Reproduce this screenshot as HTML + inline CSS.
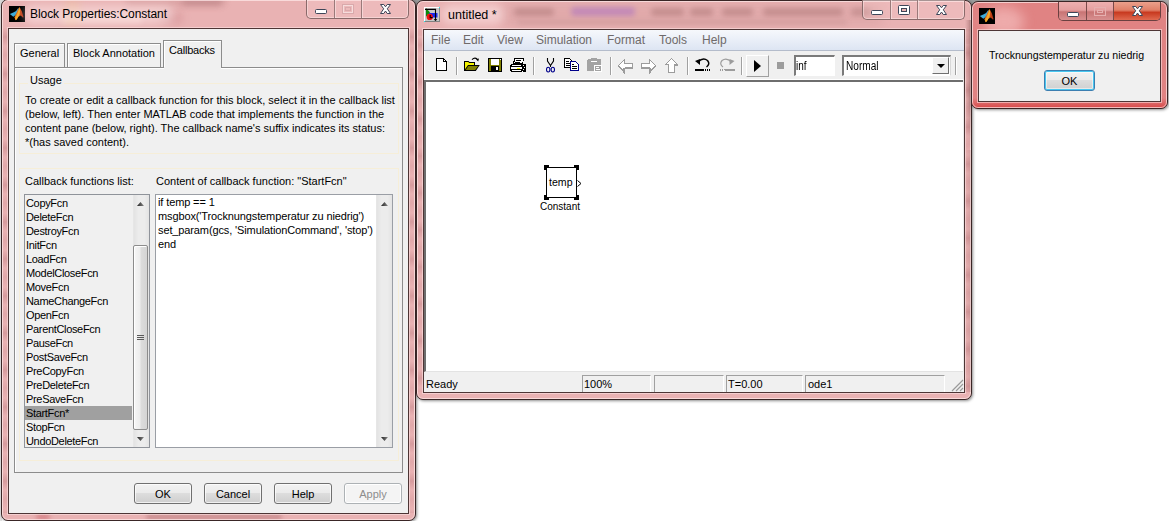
<!DOCTYPE html>
<html><head><meta charset="utf-8">
<style>
*{box-sizing:border-box;margin:0;padding:0}
html,body{width:1169px;height:521px;overflow:hidden;background:#fff;font-family:"Liberation Sans",sans-serif;font-size:11px;color:#000}
.a{position:absolute}
.t{position:absolute;white-space:pre;line-height:14px}
svg{position:absolute;overflow:visible}
.frame{position:absolute;border:1px solid #3a2626;border-radius:7px;overflow:hidden;box-shadow:1px 1px 3px rgba(0,0,0,.45)}
.frame::after{content:"";position:absolute;left:0;top:0;right:0;bottom:0;border:1px solid rgba(255,235,235,.7);border-radius:6px}
.pink{background:#e9b2b3}
.red{background:#e08383}
.client{position:absolute;background:#f0f0f0;border:1px solid #4d3535;box-shadow:0 0 0 1px rgba(255,232,232,.55)}
.tbtns{position:absolute;top:-1px;height:20px;border:1px solid #8a6a6a;border-top:none;border-radius:0 0 5px 5px;background:rgba(255,220,220,.2);box-shadow:inset 0 0 0 1px rgba(255,240,240,.45)}
.tdiv{position:absolute;top:0;bottom:0;width:1px;background:#9a7a7a;box-shadow:1px 0 0 rgba(255,240,240,.5)}
.btn{position:absolute;height:21px;border:1px solid #707070;border-radius:3px;background:linear-gradient(#f2f2f2 0,#ebebeb 45%,#dddddd 50%,#cfcfcf 100%);text-align:center;line-height:20px;box-shadow:inset 0 0 0 1px rgba(255,255,255,.7)}
.tab{position:absolute;border:1px solid #8c8c8c;border-bottom:none;background:#f0f0f0;box-shadow:inset 1px 1px 0 #fff}
.sb{position:absolute;background:linear-gradient(90deg,#e3e3e3,#ececec 30%,#ececec 70%,#e3e3e3);border-left:1px solid #e6e6e6}
.blob{position:absolute;filter:blur(2.5px);border-radius:4px}
.menu{position:absolute;top:33px;font-size:12px;line-height:14px;color:#6f6a6a;white-space:pre}
.sep{position:absolute;top:57px;width:2px;height:18px;border-left:1px solid #a0a0a0;border-right:1px solid #fff}
.panel{position:absolute;top:375px;height:17px;border-top:1px solid #a0a0a0;border-left:1px solid #a0a0a0;border-right:1px solid #fff}
</style></head><body>

<div class="a" style="left:0;top:0;width:2px;height:521px;background:#e4e4e4"></div>
<div class="a" style="left:0;top:0;width:8px;height:8px;background:#d8d8d8"></div>
<div class="a" style="left:408px;top:0;width:16px;height:8px;background:#9a9a9a"></div>
<div class="a" style="left:962px;top:0;width:16px;height:8px;background:#9a9a9a"></div>
<div class="a" style="left:972px;top:0;width:197px;height:2px;background:#9c9c9c"></div>
<div class="a" style="left:1160px;top:0;width:9px;height:12px;background:#a8a8a8"></div>
<!-- ============ Window 1: Block Properties ============ -->
<div class="frame pink" style="left:1px;top:-1px;width:415px;height:522px;">
  <div class="blob" style="left:124px;top:-3px;width:100px;height:8px;background:rgba(170,110,110,.25);filter:blur(3px)"></div>
  <div class="blob" style="left:180px;top:-2px;width:40px;height:8px;background:rgba(150,90,95,.3);filter:blur(3px)"></div>
  <div class="blob" style="left:60px;top:14px;width:80px;height:10px;background:rgba(255,230,220,.35)"></div>
  <div class="blob" style="left:62px;top:0;width:16px;height:26px;background:rgba(235,185,130,.35);filter:blur(4px)"></div>
  <div class="blob" style="left:158px;top:12px;width:22px;height:12px;background:rgba(190,110,115,.3);filter:blur(4px)"></div>
  <div class="blob" style="left:144px;top:514px;width:136px;height:6px;background:rgba(150,80,85,.35);filter:blur(2px)"></div>
  <div class="blob" style="left:34px;top:514px;width:14px;height:6px;background:rgba(190,70,80,.4);filter:blur(2px)"></div>
</div>
<svg style="left:9px;top:6px" width="16" height="16" viewBox="0 0 16 16">
  <defs><linearGradient id="mg" x1="0" y1="0" x2="1" y2="0"><stop offset="0" stop-color="#f08a20"/><stop offset=".5" stop-color="#d8561a"/><stop offset="1" stop-color="#a82810"/></linearGradient></defs>
  <rect width="16" height="16" fill="#000"/>
  <path d="M.8,8.1 L4.3,6.4 L7.1,5 L8.9,2.6 L9.8,2 L8.6,6.5 L6,9.6 L4.3,10.7 Z" fill="#3eaad8"/>
  <path d="M10.6,.9 L12.9,5.5 L14.6,11.3 L13.8,11.6 L11.7,9.6 L9.4,10.7 L7.7,13.6 L6.6,14.2 L5.4,11.3 L7.1,7.8 L8.9,3.8 Z" fill="url(#mg)"/>
  <path d="M10.6,1.2 L11.2,4.5 L10.6,8.4 L9.2,11 L7.7,13.6 L6.7,14 L6.4,12.2 L8,8.5 L9.6,3.5 Z" fill="#f6b42a" opacity=".9"/>
</svg>
<div class="a" style="left:24px;top:5px;width:150px;height:19px;border-radius:9px;background:rgba(255,240,240,.45);filter:blur(4px)"></div>
<div class="t" style="left:30px;top:7px;font-size:12px;line-height:15px;color:#000;letter-spacing:-.07px">Block Properties:Constant</div>
<div class="tbtns" style="left:306px;width:103px;">
  <div class="tdiv" style="left:27px"></div><div class="tdiv" style="left:54px"></div>
</div>
<svg style="left:315px;top:9px" width="12" height="5" viewBox="0 0 12 5"><rect x=".5" y=".5" width="11" height="4" rx="1" fill="#fff" stroke="#3d4658"/></svg>
<svg style="left:342px;top:4px" width="12" height="10" viewBox="0 0 12 10"><rect x=".5" y=".5" width="11" height="9" fill="none" stroke="#d9a9ab"/><rect x="1.5" y="1.5" width="9" height="7" fill="none" stroke="#f6dcdc" stroke-width="1"/><rect x="3.5" y="3.5" width="5" height="3" fill="none" stroke="#d9a9ab"/></svg>
<svg style="left:380px;top:4px" width="11" height="10" viewBox="0 0 11 10"><path d="M.5,.5 H3.8 L5.5,2.8 L7.2,.5 H10.5 L7.3,4.8 L10.5,9.5 H7.2 L5.5,7 L3.8,9.5 H.5 L3.7,4.8 Z" fill="#fff" stroke="#3d4658" stroke-width="1" stroke-linejoin="round"/></svg>
<div class="a" style="left:3px;top:28px;width:5px;height:485px;background:repeating-linear-gradient(180deg,rgba(165,95,100,0) 0,rgba(165,95,100,.28) 9px,rgba(165,95,100,0) 18px,rgba(165,95,100,.12) 27px,rgba(165,95,100,0) 37px)"></div>
<div class="a" style="left:409px;top:28px;width:5px;height:485px;background:repeating-linear-gradient(180deg,rgba(165,95,100,0) 0,rgba(165,95,100,.28) 9px,rgba(165,95,100,0) 18px,rgba(165,95,100,.12) 27px,rgba(165,95,100,0) 37px)"></div>
<div class="client" style="left:8px;top:28px;width:401px;height:486px;"></div>

<!-- tabs -->
<div class="a" style="left:14px;top:67px;width:389px;height:406px;border:1px solid #8c8c8c;background:#f0f0f0;box-shadow:inset 1px 1px 0 #fff"></div>
<div class="tab" style="left:14px;top:43px;width:51px;height:24px"></div>
<div class="tab" style="left:67px;top:43px;width:94px;height:24px"></div>
<div class="tab" style="left:163px;top:40px;width:59px;height:28px"></div>
<div class="a" style="left:164px;top:67px;width:57px;height:2px;background:#f0f0f0"></div>
<div class="t" style="left:20px;top:46px">General</div>
<div class="t" style="left:73px;top:46px">Block Annotation</div>
<div class="t" style="left:169px;top:43px;letter-spacing:-.2px">Callbacks</div>

<!-- usage group -->
<div class="a" style="left:19px;top:83px;width:380px;height:71px;border:1px solid #f6eed8"></div>
<div class="a" style="left:28px;top:76px;width:36px;height:10px;background:#f0f0f0"></div>
<div class="t" style="left:30px;top:73px">Usage</div>
<div class="t" style="left:25px;top:93px">To create or edit a callback function for this block, select it in the callback list
(below, left). Then enter MATLAB code that implements the function in the
content pane (below, right). The callback name's suffix indicates its status:
*(has saved content).</div>

<div class="a" style="left:19px;top:168px;width:380px;height:293px;border:1px solid #f6eed8"></div>
<div class="t" style="left:25px;top:174px">Callback functions list:</div>
<div class="t" style="left:156px;top:174px">Content of callback function: "StartFcn"</div>

<!-- list -->
<div class="a" style="left:24px;top:194px;width:126px;height:254px;border:1px solid #8f939a;background:#f0f0f0;overflow:hidden">
  <div class="a" style="left:0;top:211px;width:107px;height:14px;background:#a0a0a0"></div>
  <div class="t" style="left:1px;top:1px;letter-spacing:-0.33px">CopyFcn
DeleteFcn
DestroyFcn
InitFcn
LoadFcn
ModelCloseFcn
MoveFcn
NameChangeFcn
OpenFcn
ParentCloseFcn
PauseFcn
PostSaveFcn
PreCopyFcn
PreDeleteFcn
PreSaveFcn
StartFcn*
StopFcn
UndoDeleteFcn</div>
  <div class="sb" style="left:108px;top:0;width:16px;height:252px"></div>
  <div class="a" style="left:108px;top:50px;width:15px;height:185px;border:1px solid #8c8c8c;border-radius:2px;background:linear-gradient(90deg,#f7f7f7,#ededed 45%,#dcdcdc 55%,#d4d4d4);box-shadow:inset 1px 1px 0 #fff"></div>
  <svg style="left:112px;top:140px" width="7" height="5"><path d="M0,.5H7M0,2.5H7M0,4.5H7" stroke="#5a5a5a" stroke-width="1"/></svg>
  <svg style="left:112px;top:7px" width="7" height="4"><defs><linearGradient id="ag" x1="0" x2="1"><stop offset="0" stop-color="#222"/><stop offset="1" stop-color="#888"/></linearGradient></defs><path d="M0,4 L3.5,0 L7,4 Z" fill="url(#ag)"/></svg>
  <svg style="left:112px;top:242px" width="7" height="4"><path d="M0,0 L3.5,4 L7,0 Z" fill="url(#ag)"/></svg>
</div>

<!-- code -->
<div class="a" style="left:155px;top:194px;width:238px;height:254px;border:1px solid #9a9ea5;background:#fff;overflow:hidden">
  <div class="t" style="left:2px;top:0px;letter-spacing:-0.12px">if temp == 1
msgbox('Trocknungstemperatur zu niedrig')
set_param(gcs, 'SimulationCommand', 'stop')
end</div>
  <div class="sb" style="left:220px;top:0;width:16px;height:252px"></div>
  <svg style="left:225px;top:7px" width="7" height="4"><path d="M0,4 L3.5,0 L7,4 Z" fill="url(#ag)"/></svg>
  <svg style="left:225px;top:242px" width="7" height="4"><path d="M0,0 L3.5,4 L7,0 Z" fill="url(#ag)"/></svg>
</div>

<!-- buttons -->
<div class="btn" style="left:134px;top:483px;width:58px">OK</div>
<div class="btn" style="left:204px;top:483px;width:58px">Cancel</div>
<div class="btn" style="left:274px;top:483px;width:58px">Help</div>
<div class="btn" style="left:344px;top:483px;width:58px;border-color:#adb2b5;background:#f4f4f4;color:#8d8d8d;box-shadow:inset 0 0 0 1px #fff">Apply</div>

<!-- ============ Window 2: Simulink ============ -->
<div class="frame pink" style="left:416px;top:0px;width:556px;height:400px;">
  <div class="blob" style="left:97px;top:7px;width:40px;height:8px;background:rgba(150,95,95,.35)"></div>
  <div class="blob" style="left:154px;top:6px;width:64px;height:9px;background:rgba(170,110,205,.5)"></div>
  <div class="blob" style="left:234px;top:7px;width:33px;height:8px;background:rgba(150,95,95,.35)"></div>
  <div class="blob" style="left:273px;top:7px;width:23px;height:8px;background:rgba(150,95,95,.35)"></div>
  <div class="blob" style="left:305px;top:7px;width:31px;height:8px;background:rgba(150,95,95,.35)"></div>
  <div class="blob" style="left:346px;top:7px;width:80px;height:8px;background:rgba(150,95,95,.35)"></div>
  <div class="blob" style="left:434px;top:7px;width:20px;height:8px;background:rgba(150,95,95,.3)"></div>
  <div class="blob" style="left:100px;top:19px;width:330px;height:5px;background:rgba(170,120,120,.2)"></div>
  <div class="blob" style="left:85px;top:2px;width:380px;height:24px;background:rgba(160,100,100,.1);filter:blur(5px)"></div>
</div>
<svg style="left:424px;top:7px" width="16" height="15" viewBox="0 0 16 15">
  <rect x="0" y="0" width="16" height="15" fill="#c8c8c8"/>
  <path d="M0,0H16V1H1V15H0Z" fill="#fff"/>
  <path d="M16,0V15H0V14H15V0Z" fill="#808080"/>
  <path d="M2,1 L2,9.7 L6,5.5 Z" fill="#0a8a0a"/>
  <rect x="5" y="6" width="8.5" height="4.5" fill="#1428f0"/>
  <circle cx="5.7" cy="9.9" r="3.1" fill="#f01010"/>
  <path d="M6.2,8 V10.6 H8.6" stroke="#000" stroke-width="1.1" fill="none"/>
  <path d="M1,2.4 H11.5 V13" stroke="#000" stroke-width="1.1" fill="none"/>
  <path d="M10.2,12.2 L11.5,13.8 L12.8,12.2" stroke="#000" stroke-width="1" fill="none"/>
  <rect x="15" y="0" width="1" height="1" fill="#2ee"/><rect x="0" y="14" width="1" height="1" fill="#2ee"/>
</svg>
<div class="a" style="left:442px;top:5px;width:62px;height:19px;border-radius:9px;background:rgba(255,240,240,.45);filter:blur(4px)"></div>
<div class="t" style="left:448px;top:8px;font-size:12.5px;line-height:15px;color:#000">untitled *</div>
<div class="tbtns" style="left:862px;width:103px;top:0;height:20px">
  <div class="tdiv" style="left:27px"></div><div class="tdiv" style="left:54px"></div>
</div>
<svg style="left:871px;top:10px" width="12" height="5" viewBox="0 0 12 5"><rect x=".5" y=".5" width="11" height="4" rx="1" fill="#fff" stroke="#3d4658"/></svg>
<svg style="left:898px;top:5px" width="12" height="10" viewBox="0 0 12 10"><rect x=".5" y=".5" width="11" height="9" rx="1" fill="#fff" stroke="#3d4658"/><rect x="3.5" y="3.5" width="5" height="3" fill="#e9b2b3" stroke="#3d4658"/></svg>
<svg style="left:936px;top:5px" width="11" height="10" viewBox="0 0 11 10"><path d="M.5,.5 H3.8 L5.5,2.8 L7.2,.5 H10.5 L7.3,4.8 L10.5,9.5 H7.2 L5.5,7 L3.8,9.5 H.5 L3.7,4.8 Z" fill="#fff" stroke="#3d4658" stroke-width="1" stroke-linejoin="round"/></svg>
<div class="a" style="left:418px;top:29px;width:5px;height:363px;background:repeating-linear-gradient(180deg,rgba(165,95,100,0) 0,rgba(165,95,100,.28) 9px,rgba(165,95,100,0) 18px,rgba(165,95,100,.12) 27px,rgba(165,95,100,0) 37px);background-position:0 7px"></div>
<div class="a" style="left:965px;top:29px;width:5px;height:363px;background:repeating-linear-gradient(180deg,rgba(165,95,100,0) 0,rgba(165,95,100,.28) 9px,rgba(165,95,100,0) 18px,rgba(165,95,100,.12) 27px,rgba(165,95,100,0) 37px);background-position:0 15px"></div>
<div class="a" style="left:965px;top:20px;width:6px;height:130px;background:linear-gradient(90deg,rgba(90,40,40,0),rgba(90,40,40,.32));-webkit-mask-image:linear-gradient(#000 65%,transparent)"></div>
<div class="a" style="left:965px;top:150px;width:6px;height:242px;background:linear-gradient(90deg,rgba(90,40,40,0),rgba(90,40,40,.12))"></div>
<div class="client" style="left:423px;top:29px;width:542px;height:364px;"></div>
<div class="a" style="left:424px;top:30px;width:540px;height:21px;background:linear-gradient(#f6f8fc,#dde5f3);border-bottom:1px solid #b4bccb"></div>
<div class="menu" style="left:431px">File</div>
<div class="menu" style="left:463px">Edit</div>
<div class="menu" style="left:497px">View</div>
<div class="menu" style="left:536px">Simulation</div>
<div class="menu" style="left:607px">Format</div>
<div class="menu" style="left:659px">Tools</div>
<div class="menu" style="left:702px">Help</div>
<div class="a" style="left:424px;top:51px;width:540px;height:29px;background:#f0f0f0;border-left:1px solid #fff;border-bottom:1px solid #fff;border-right:1px solid #e6e6e6"></div>

<!-- toolbar icons -->
<svg style="left:436px;top:58px" width="12" height="14" viewBox="0 0 12 14" shape-rendering="crispEdges">
  <path d="M.5,.5 H7.5 L10.5,3.5 V12.5 H.5 Z" fill="#fff" stroke="#000"/>
  <path d="M7.5,.5 V3.5 H10.5" fill="none" stroke="#000"/>
</svg>
<div class="sep" style="left:456px"></div>
<svg style="left:464px;top:57px" width="16" height="15" viewBox="0 0 16 15">
  <path d="M0,4 H4.5 L5.5,5 H11 V8 H15.8 L11.8,14 H0 Z" fill="#000"/>
  <path d="M1,5 H4.2 L5.2,6 H10 V8 H4 L1,12.3 Z" fill="#f4f400"/>
  <path d="M4.4,9 H14.2 L11.2,13 H1.6 Z" fill="#808000"/>
  <path d="M8,2.6 Q10.5,0 13.2,2" stroke="#000" stroke-width="1.1" fill="none"/>
  <path d="M12,2.2 L15,1.6 L14.2,4.6 Z" fill="#000"/>
</svg>
<svg style="left:488px;top:58px" width="14" height="14" viewBox="0 0 14 14" shape-rendering="crispEdges">
  <rect x="0" y="0" width="14" height="14" fill="#000"/>
  <rect x="1" y="1" width="12" height="12" fill="#808000"/>
  <rect x="3" y="1" width="8" height="6" fill="#fff"/>
  <rect x="3" y="8" width="8" height="5" fill="#000"/>
  <rect x="8" y="9" width="2" height="3" fill="#fff"/>
  <rect x="12" y="1" width="1" height="1" fill="#fff"/>
</svg>
<svg style="left:510px;top:58px" width="17" height="14" viewBox="0 0 17 14" shape-rendering="crispEdges">
  <path d="M4,0 H14 L13,6 H3 Z" fill="#000"/>
  <path d="M5,1 H13 L12.3,5 H4.3 Z" fill="#fff"/>
  <rect x="6" y="2" width="5" height="1" fill="#000"/><rect x="5" y="4" width="5" height="1" fill="#000"/>
  <path d="M1,6 H15 L16,7 V13 L15,14 H1 L0,13 V7 Z" fill="#000"/>
  <rect x="2" y="7" width="9" height="1" fill="#fff"/>
  <rect x="1" y="9" width="11" height="2" fill="#fff"/>
  <rect x="7" y="10" width="3" height="1" fill="#ff0"/>
  <rect x="2" y="12" width="9" height="1" fill="#fff"/>
  <rect x="13" y="7" width="1" height="1" fill="#fff"/><rect x="14" y="9" width="1" height="1" fill="#fff"/>
  <rect x="13" y="11" width="1" height="1" fill="#fff"/><rect x="12" y="13" width="1" height="1" fill="#fff"/>
</svg>
<div class="sep" style="left:533px"></div>
<svg style="left:546px;top:58px" width="9" height="15" viewBox="0 0 9 15">
  <path d="M1.5,0 V3 L4.5,7.5 L7.5,3 V0" stroke="#000" stroke-width="1.1" fill="none"/>
  <path d="M4,7 H5 V9 H4Z" fill="#000"/>
  <ellipse cx="2.2" cy="11.6" rx="1.7" ry="2.4" stroke="#00008b" stroke-width="1.1" fill="none"/>
  <ellipse cx="6.8" cy="11.6" rx="1.7" ry="2.4" stroke="#00008b" stroke-width="1.1" fill="none"/>
</svg>
<svg style="left:564px;top:58px" width="16" height="14" viewBox="0 0 16 14" shape-rendering="crispEdges">
  <path d="M.5,.5 H5.5 L7.5,2.5 V9.5 H.5 Z" fill="#fff" stroke="#000"/>
  <path d="M2,3.5 H5 M2,5.5 H6 M2,7.5 H6" stroke="#000"/>
  <path d="M6.5,3.5 H11.5 L14.5,6.5 V12.5 H6.5 Z" fill="#fff" stroke="#00008b"/>
  <path d="M6.5,3.5 H11.5 L14.5,6.5 V12.5 H6.5 Z" fill="none" stroke="#00008b"/>
  <path d="M8,6.5 H10 M8,8.5 H13 M8,10.5 H13" stroke="#000"/>
</svg>
<svg style="left:587px;top:58px" width="16" height="15" viewBox="0 0 16 15" shape-rendering="crispEdges">
  <rect x="0" y="1" width="14" height="12" rx="2" fill="#a3a3a3"/>
  <rect x="4" y="0" width="6" height="2" fill="#a3a3a3"/>
  <rect x="4" y="3" width="6" height="1" fill="#fff"/>
  <rect x="7" y="7" width="8" height="7" fill="#fff"/>
  <rect x="8" y="8" width="6" height="5" fill="#a3a3a3"/>
  <rect x="9" y="9" width="3" height="1" fill="#fff"/><rect x="9" y="11" width="4" height="1" fill="#fff"/>
</svg>
<div class="sep" style="left:610px"></div>
<svg style="left:618px;top:59px" width="16" height="14" viewBox="0 0 16 14" shape-rendering="crispEdges">
  <path d="M6.5,.5 L.5,6.5 L6.5,12.5 V9.5 H14.5 V4.5 H6.5 Z" fill="#fff" stroke="#9c9c9c"/>
  <path d="M6,9 L6,13 L1,7" stroke="#9c9c9c" fill="none" stroke-width="1.5"/>
  <path d="M7,9 H14.5 V5" stroke="#9c9c9c" stroke-width="1.5" fill="none"/>
</svg>
<svg style="left:641px;top:59px" width="16" height="14" viewBox="0 0 16 14" shape-rendering="crispEdges">
  <path d="M8.5,.5 L14.5,6.5 L8.5,12.5 V9.5 H.5 V4.5 H8.5 Z" fill="#fff" stroke="#9c9c9c"/>
  <path d="M9,9 L9,13 L14,7" stroke="#9c9c9c" fill="none" stroke-width="1.5"/>
  <path d="M.5,9 H9" stroke="#9c9c9c" stroke-width="1.5" fill="none"/>
</svg>
<svg style="left:665px;top:58px" width="14" height="16" viewBox="0 0 14 16" shape-rendering="crispEdges">
  <path d="M6.5,.5 L.5,6.5 H3.5 V14.5 H9.5 V6.5 H12.5 Z" fill="#fff" stroke="#9c9c9c"/>
  <path d="M4,14.5 H9.5 V7 H13" stroke="#9c9c9c" stroke-width="1.5" fill="none"/>
</svg>
<div class="sep" style="left:687px"></div>
<svg style="left:695px;top:58px" width="16" height="14" viewBox="0 0 16 14">
  <path d="M3,4 Q8,-1 12.5,2.5 Q15.5,6 11.5,9" stroke="#000" stroke-width="1.5" fill="none"/>
  <path d="M0,3 L5,1 L5,7 Z" fill="#000"/>
  <rect x="0" y="11" width="9" height="2" fill="#000"/>
  <rect x="10" y="11" width="1" height="2" fill="#000"/><rect x="12" y="11" width="1" height="2" fill="#000"/><rect x="14" y="11" width="1" height="2" fill="#000"/>
</svg>
<svg style="left:719px;top:58px" width="16" height="14" viewBox="0 0 16 14">
  <path d="M12.5,4 Q7.5,-1 3,2.5 Q0,6 4,9" stroke="#9c9c9c" stroke-width="1.2" fill="none"/>
  <path d="M15.5,3 L10.5,1 L10.5,7 Z" fill="#9c9c9c"/>
  <rect x="6" y="11" width="10" height="2" fill="#9c9c9c"/>
  <rect x="1" y="11" width="1" height="2" fill="#9c9c9c"/><rect x="3" y="11" width="1" height="2" fill="#9c9c9c"/><rect x="5" y="11" width="1" height="1" fill="#9c9c9c"/>
</svg>
<div class="sep" style="left:741px"></div>
<div class="a" style="left:746px;top:55px;width:23px;height:22px;border-top:1px solid #fff;border-left:1px solid #fff;border-right:1px solid #a0a0a0;border-bottom:1px solid #a0a0a0"></div>
<svg style="left:754px;top:60px" width="7" height="12"><path d="M0,0 L7,6 L0,12 Z" fill="#000"/></svg>
<div class="a" style="left:777px;top:62px;width:7px;height:7px;background:#9c9c9c"></div>
<!-- inf -->
<div class="a" style="left:794px;top:55px;width:41px;height:21px;background:#fff;border-top:2px solid #7a7a7a;border-left:2px solid #7a7a7a;border-right:1px solid #fff;border-bottom:1px solid #fff"></div>
<div class="t" style="left:796px;top:59px;font-size:12px;color:#000;transform:scaleX(.83);transform-origin:0 0">inf</div>
<!-- Normal combo -->
<div class="a" style="left:842px;top:55px;width:109px;height:21px;background:#fff;border-top:2px solid #7a7a7a;border-left:2px solid #7a7a7a;border-right:1px solid #d8d8d8;border-bottom:1px solid #fff"></div>
<div class="a" style="left:932px;top:57px;width:17px;height:17px;background:#f0f0f0;border-top:1px solid #fff;border-left:1px solid #fff;border-right:1px solid #707070;border-bottom:1px solid #707070"></div>
<svg style="left:937px;top:64px" width="8" height="4"><path d="M0,0 H8 L4,4 Z" fill="#000"/></svg>
<div class="t" style="left:846px;top:59px;font-size:12px;transform:scaleX(.84);transform-origin:0 0">Normal</div>
<div class="sep" style="left:955px"></div>

<!-- canvas -->
<div class="a" style="left:424px;top:80px;width:539px;height:292px;background:#fff;border-top:2px solid #6e6e6e;border-left:2px solid #6e6e6e;border-bottom:1px solid #e3e3e3"></div>
<div class="a" style="left:963px;top:80px;width:1px;height:292px;background:#ececec"></div>
<!-- block -->
<svg style="left:543px;top:164px" width="40" height="37" shape-rendering="crispEdges">
  <rect x="1" y="1" width="5" height="5" fill="#000"/><rect x="31" y="1" width="5" height="5" fill="#000"/>
  <rect x="1" y="31" width="5" height="5" fill="#000"/><rect x="31" y="31" width="5" height="5" fill="#000"/>
  <rect x="4" y="4" width="2" height="2" fill="#fff"/><rect x="31" y="4" width="2" height="2" fill="#fff"/>
  <rect x="4" y="31" width="2" height="2" fill="#fff"/><rect x="31" y="31" width="2" height="2" fill="#fff"/>
  <rect x="3.5" y="3.5" width="30" height="30" fill="none" stroke="#000" stroke-width="1"/>
  <path d="M34.5,16.5 L38,19.5 L34.5,22.5" fill="#fff" stroke="#000" stroke-width="1" shape-rendering="auto"/>
</svg>
<div class="t" style="left:549px;top:175px;font-size:10.6px">temp</div>
<div class="t" style="left:540px;top:200px;font-size:10px">Constant</div>

<!-- status bar -->
<div class="t" style="left:426px;top:377px">Ready</div>
<div class="panel" style="left:582px;width:69px"></div>
<div class="t" style="left:584px;top:377px">100%</div>
<div class="panel" style="left:654px;width:70px"></div>
<div class="panel" style="left:726px;width:77px"></div>
<div class="t" style="left:728px;top:377px">T=0.00</div>
<div class="panel" style="left:805px;width:140px"></div>
<div class="t" style="left:808px;top:377px">ode1</div>
<svg style="left:951px;top:379px" width="13" height="13"><path d="M1,12 L12,1 M5,12 L12,5 M9,12 L12,9" stroke="#9a9a9a" stroke-width="1.2"/></svg>

<!-- ============ Msgbox ============ -->
<div class="frame red" style="left:971px;top:1px;width:197px;height:108px;">
  <div class="blob" style="left:12px;top:5px;width:40px;height:30px;border-radius:50%;background:rgba(255,220,220,.45);filter:blur(6px)"></div>
  <div class="a" style="left:0;top:96px;width:197px;height:10px;background:linear-gradient(#e08383,#d84848)"></div>
</div>
<svg style="left:979px;top:8px" width="16" height="16" viewBox="0 0 16 16">
  <defs><linearGradient id="mg2" x1="0" y1="0" x2="1" y2="0"><stop offset="0" stop-color="#f08a20"/><stop offset=".5" stop-color="#d8561a"/><stop offset="1" stop-color="#a82810"/></linearGradient></defs>
  <rect width="16" height="16" fill="#000"/>
  <path d="M.8,8.1 L4.3,6.4 L7.1,5 L8.9,2.6 L9.8,2 L8.6,6.5 L6,9.6 L4.3,10.7 Z" fill="#3eaad8"/>
  <path d="M10.6,.9 L12.9,5.5 L14.6,11.3 L13.8,11.6 L11.7,9.6 L9.4,10.7 L7.7,13.6 L6.6,14.2 L5.4,11.3 L7.1,7.8 L8.9,3.8 Z" fill="url(#mg2)"/>
  <path d="M10.6,1.2 L11.2,4.5 L10.6,8.4 L9.2,11 L7.7,13.6 L6.7,14 L6.4,12.2 L8,8.5 L9.6,3.5 Z" fill="#f6b42a" opacity=".9"/>
</svg>
<div class="a" style="left:1058px;top:2px;width:103px;height:19px;border:1px solid #6a4040;border-top:none;border-radius:0 0 5px 5px;overflow:hidden">
  <div class="a" style="left:0;top:0;width:28px;height:18px;background:linear-gradient(#eeb0b0 0,#e5a0a0 45%,#c87474 55%,#d89090 100%)"></div>
  <div class="a" style="left:27px;top:0;width:27px;height:18px;background:linear-gradient(#eeb0b0 0,#e5a0a0 45%,#c87474 55%,#d89090 100%);border-left:1px solid #7a4a4a"></div>
  <div class="a" style="left:54px;top:0;width:48px;height:18px;background:linear-gradient(#eba08c 0,#e08068 45%,#c83a20 58%,#e06a50 100%);border-left:1px solid #7a4a4a"></div>
</div>
<svg style="left:1067px;top:12px" width="12" height="5" viewBox="0 0 12 5"><rect x=".5" y=".5" width="11" height="4" rx="1" fill="#fff" stroke="#3d4658"/></svg>
<svg style="left:1094px;top:7px" width="12" height="9" viewBox="0 0 12 9"><rect x=".5" y=".5" width="11" height="8" fill="none" stroke="#e6b0b0"/><rect x="3.5" y="3.5" width="5" height="2" fill="none" stroke="#e6b0b0"/></svg>
<svg style="left:1132px;top:6px" width="11" height="10" viewBox="0 0 11 10"><path d="M.5,.5 H3.8 L5.5,2.8 L7.2,.5 H10.5 L7.3,4.8 L10.5,9.5 H7.2 L5.5,7 L3.8,9.5 H.5 L3.7,4.8 Z" fill="#fff" stroke="#3d4658" stroke-width="1" stroke-linejoin="round"/></svg>
<div class="client" style="left:978px;top:30px;width:183px;height:72px;"></div>
<div class="t" style="left:989px;top:48px;font-size:10.6px">Trocknungstemperatur zu niedrig</div>
<div class="btn" style="left:1044px;top:70px;width:51px;border-color:#3c7fb1;box-shadow:inset 0 0 0 1px #48c7f0,inset 0 0 0 2px rgba(255,255,255,.5)">OK</div>

</body></html>
